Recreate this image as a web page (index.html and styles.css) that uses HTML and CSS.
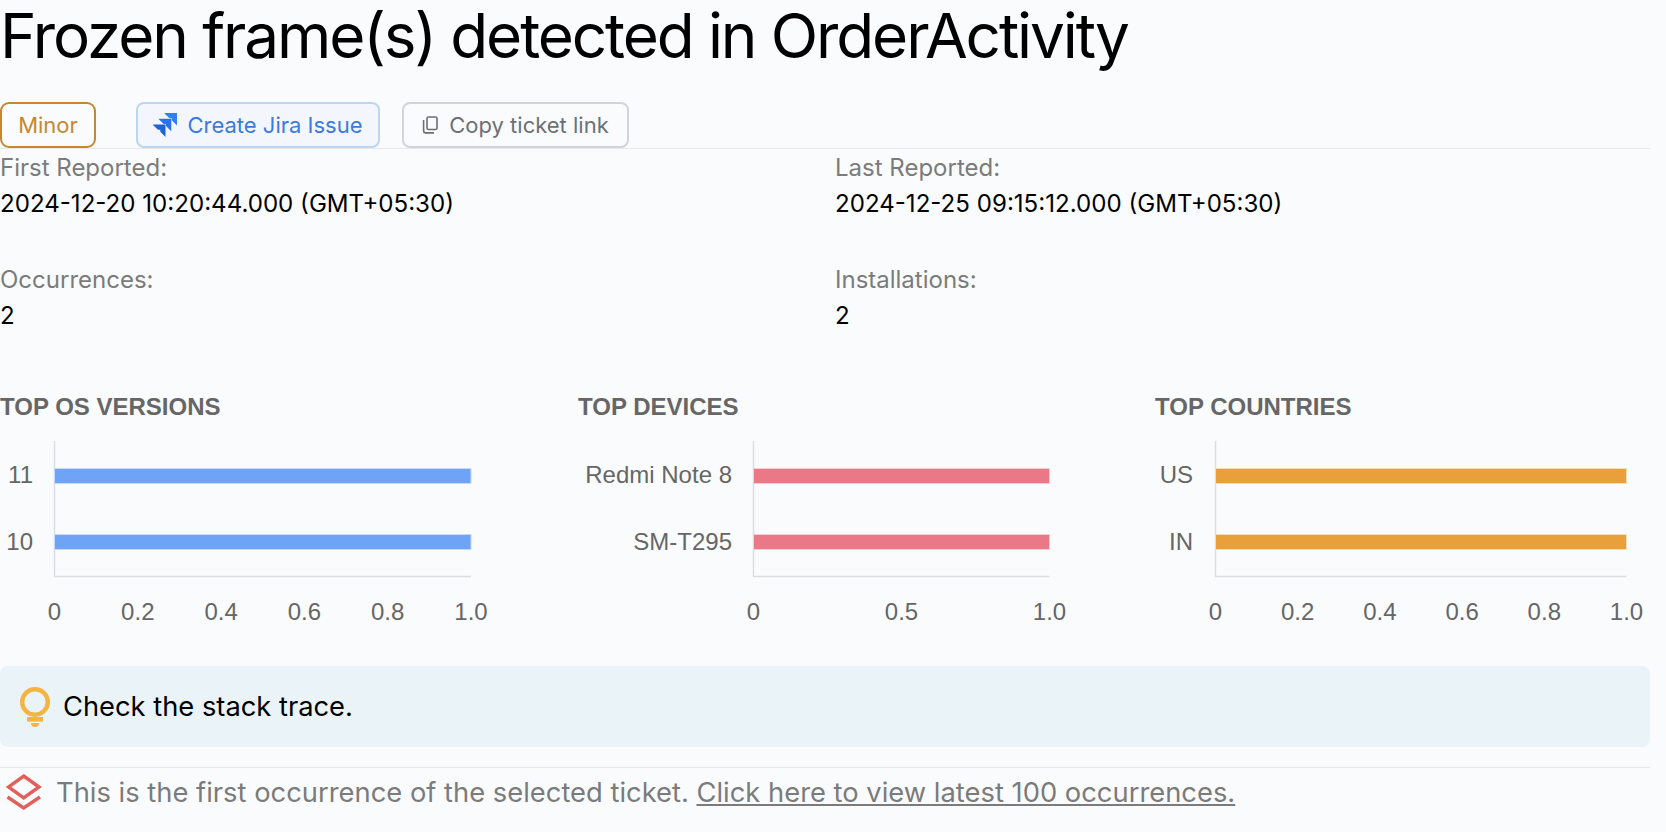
FILE: index.html
```html
<!DOCTYPE html>
<html lang="en">
<head>
<meta charset="utf-8">
<title>Frozen frame(s) detected in OrderActivity</title>
<link rel="stylesheet" href="styles.css">
</head>
<body>
<main class="page">
  <h1 class="title">Frozen frame(s) detected in OrderActivity</h1>
  <div class="actions">
    <span class="badge">Minor</span>
    <button class="btn btn-jira">
      <svg class="icon-jira" viewBox="0 0 24 24"><path fill="#1f63db" d="M0 11.500H12.500V24L7.300 18.800V16.700H5L0 12.100z"/><path fill="#2a72ea" d="M5.750 5.750H18.250V18.250L13 13V11H10.750L5.750 6.350z"/><path fill="#2f80f7" d="M11.500 0H24V12.500L18.800 7.300V5.200H16.500L11.500 .6z"/></svg>
      <span>Create Jira Issue</span>
    </button>
    <button class="btn btn-copy">
      <svg class="icon-copy" viewBox="0 0 16 18" fill="none" stroke="#6b7077" stroke-width="1.600"><rect x="5" y="1" width="10" height="12.500" rx="1.600"/><path d="M1.600 4v10.500a2.400 2.400 0 0 0 2.400 2.400h8"/></svg>
      <span>Copy ticket link</span>
    </button>
  </div>
  <section class="meta">
    <div class="meta-item"><div class="meta-label">First Reported:</div><div class="meta-value">2024-12-20 10:20:44.000 (GMT+05:30)</div></div>
    <div class="meta-item"><div class="meta-label">Last Reported:</div><div class="meta-value">2024-12-25 09:15:12.000 (GMT+05:30)</div></div>
    <div class="meta-item"><div class="meta-label">Occurrences:</div><div class="meta-value">2</div></div>
    <div class="meta-item"><div class="meta-label">Installations:</div><div class="meta-value">2</div></div>
  </section>
  <section class="charts">
    <div class="chart">
      <h2 class="chart-title">TOP OS VERSIONS</h2>
      <svg class="chart-svg" viewBox="0 0 490 210">
        <path class="axis" d="M54.500 19V154.500H471"/>
        <rect class="bar bar-blue" x="54.500" y="46.500" width="416.500" height="15"/>
        <rect class="bar bar-blue" x="54.500" y="112.500" width="416.500" height="15"/>
        <text class="tick end" x="33" y="61">11</text>
        <text class="tick end" x="33" y="127.500">10</text>
        <text class="tick mid" x="54.500" y="197.500">0</text>
        <text class="tick mid" x="137.800" y="197.500">0.2</text>
        <text class="tick mid" x="221.100" y="197.500">0.4</text>
        <text class="tick mid" x="304.400" y="197.500">0.6</text>
        <text class="tick mid" x="387.700" y="197.500">0.8</text>
        <text class="tick mid" x="471" y="197.500">1.0</text>
      </svg>
    </div>
    <div class="chart">
      <h2 class="chart-title">TOP DEVICES</h2>
      <svg class="chart-svg" viewBox="0 0 490 210">
        <path class="axis" d="M175.500 19V154.500H471.500"/>
        <rect class="bar bar-red" x="175.500" y="46.500" width="296" height="15"/>
        <rect class="bar bar-red" x="175.500" y="112.500" width="296" height="15"/>
        <text class="tick end" x="154" y="61">Redmi Note 8</text>
        <text class="tick end" x="154" y="127.500">SM-T295</text>
        <text class="tick mid" x="175.500" y="197.500">0</text>
        <text class="tick mid" x="323.500" y="197.500">0.5</text>
        <text class="tick mid" x="471.500" y="197.500">1.0</text>
      </svg>
    </div>
    <div class="chart">
      <h2 class="chart-title">TOP COUNTRIES</h2>
      <svg class="chart-svg" viewBox="0 0 490 210">
        <path class="axis" d="M60.500 19V154.500H471.500"/>
        <rect class="bar bar-orange" x="60.500" y="46.500" width="411" height="15"/>
        <rect class="bar bar-orange" x="60.500" y="112.500" width="411" height="15"/>
        <text class="tick end" x="38" y="61">US</text>
        <text class="tick end" x="38" y="127.500">IN</text>
        <text class="tick mid" x="60.500" y="197.500">0</text>
        <text class="tick mid" x="142.700" y="197.500">0.2</text>
        <text class="tick mid" x="224.900" y="197.500">0.4</text>
        <text class="tick mid" x="307.100" y="197.500">0.6</text>
        <text class="tick mid" x="389.300" y="197.500">0.8</text>
        <text class="tick mid" x="471.500" y="197.500">1.0</text>
      </svg>
    </div>
  </section>
  <aside class="tip">
    <svg class="icon-bulb" viewBox="0 0 30 40" fill="none"><circle cx="15" cy="15" r="12.800" stroke="#f5b33f" stroke-width="4.400"/><rect x="7" y="30" width="16" height="4.600" fill="#f5b33f"/><path d="M11 36h8a4 4 0 0 1-8 0z" fill="#f5b33f"/></svg>
    <span>Check the stack trace.</span>
  </aside>
  <footer class="note">
    <svg class="icon-layers" viewBox="0 0 36 38" fill="none" stroke="#e0605a" stroke-width="3.400"><path d="M17.700 3 33 14 17.700 25 2.400 14z"/><path d="M1.500 24 17.700 35 34 24"/></svg>
    <span>This is the first occurrence of the selected ticket. <a class="note-link" href="#">Click here to view latest 100 occurrences.</a></span>
  </footer>
</main>
</body>
</html>
```
FILE: styles.css
```css
html, body { margin: 0; padding: 0; height: 100%; overflow: hidden; background: #fafbfd; }
body { font-family: Inter, "Liberation Sans", sans-serif; color: #000; }
.page { width: 1650px; }
.title { margin: 0; padding-top: 2px; font-size: 62px; line-height: 68px; font-weight: 400; letter-spacing: -2.100px; white-space: nowrap; }
.actions { display: flex; align-items: center; height: 46px; margin-top: 32px; border-bottom: 1px solid #e6e8ea; }
.badge { box-sizing: border-box; width: 96px; height: 46px; display: flex; align-items: center; justify-content: center; border: 2px solid #c6882e; border-radius: 9px; color: #c6882e; font-size: 22px; }
.btn { box-sizing: border-box; height: 46px; display: flex; align-items: center; justify-content: center; white-space: nowrap; font: inherit; font-size: 22px; border-radius: 8px; background: transparent; padding: 0; }
.btn-jira { width: 244px; margin-left: 40px; gap: 10px; border: 2px solid #bcd5f3; background: #f3f7fd; color: #3b7be0; }
.btn-copy { width: 227px; margin-left: 22px; gap: 11px; border: 2px solid #d2d4d8; color: #6b7077; }
.icon-jira { width: 24px; height: 24px; }
.icon-copy { width: 16px; height: 18px; }
.meta { display: grid; grid-template-columns: 835px 1fr; }
.meta-item { height: 112px; padding-top: 5px; box-sizing: border-box; }
.meta-label { font-size: 24px; line-height: 27px; color: #7b7b7b; }
.meta-value { font-size: 24.100px; line-height: 27px; margin-top: 9px; }
.charts { display: grid; grid-template-columns: 578px 577px 1fr; margin-top: 19px; }
.chart-title { margin: 0; font-family: "Liberation Sans", Arial, sans-serif; font-size: 24px; line-height: 30px; font-weight: 700; color: #666; }
.chart-svg { display: block; width: 490px; height: 210px; }
.axis { fill: none; stroke: #dcdde1; stroke-width: 1.500; }
.bar { stroke-width: 1; }
.bar-blue { fill: #6fa3f5; stroke: #c6dafb; }
.bar-red { fill: #eb7886; stroke: #f7ccd2; }
.bar-orange { fill: #e9a03b; stroke: #f6dcb5; }
.tick { font-family: "Liberation Sans", Arial, sans-serif; font-size: 24px; fill: #666; }
.end { text-anchor: end; }
.mid { text-anchor: middle; }
.tip { display: flex; align-items: center; gap: 13px; height: 81px; padding-left: 20px; margin-top: 34px; background: #eaf3f8; border-radius: 8px; font-size: 27.300px; }
.icon-bulb { width: 30px; height: 40px; }
.note { display: flex; align-items: center; gap: 14px; margin-top: 20px; padding-left: 6px; padding-top: 3px; border-top: 1px solid #e6e8ea; height: 46px; box-sizing: border-box; color: #7b7b7b; font-size: 27.350px; }
.icon-layers { width: 36px; height: 38px; flex: none; }
.note-link { color: #7b7b7b; text-decoration: underline; }
```
